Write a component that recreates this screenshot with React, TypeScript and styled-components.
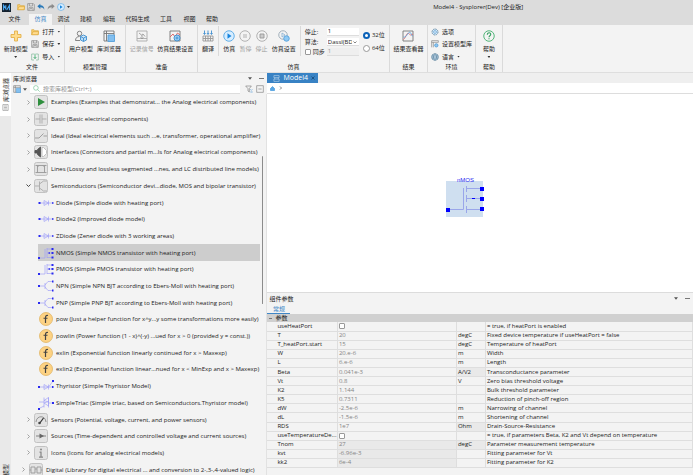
import React from "react";
import styled, { createGlobalStyle, css } from "styled-components";

const Global = createGlobalStyle`
  *, *::before, *::after { box-sizing: border-box; }
  html, body, #root { height: 100%; }
  body { margin: 0; overflow: hidden; background: #f3f3f3; color: #222;
    font: 6px/8px "Open Sans", "Noto Sans CJK SC", sans-serif; }
  button, input, select { font: inherit; color: inherit; margin: 0; padding: 0; border: 0; background: none; }
  button { white-space: nowrap; }
  svg { display: block; flex: none; }
`;

const Shell = styled.div`display: flex; flex-direction: column; height: 100vh;`;
const TitleBar = styled.header`
  display: grid; grid-template-columns: 38% 1fr; align-items: center;
  height: 14px; flex: none; background: #dcdcdc;
`;
const QuickBar = styled.div`display: flex; align-items: center; gap: 2px; padding-left: 2px;`;
const QuickButton = styled.button`display: flex;`;
const AppMark = styled.span`display: flex; margin-right: 4px;`;
const Title = styled.h1`margin: 0; font-size: 6px; font-weight: 400; line-height: 14px; text-align: center;`;
const MenuBar = styled.nav`display: flex; height: 11px; flex: none; background: #dcdcdc;`;
const MenuTab = styled.button<{ $on?: boolean; $w: number }>`
  width: ${p => p.$w}px; line-height: 11px; text-align: center;
  ${p => p.$on && css`background: #f3f3f3; color: #3f86c6;`}
`;

const Ribbon = styled.section`
  display: flex; height: 48px; flex: none; background: #f3f3f3; border-bottom: 1px solid #dedede;
`;
const Group = styled.div<{ $w: number }>`
  display: flex; flex-direction: column; width: ${p => p.$w}px; flex: none; padding-top: 1px;
  border-right: 1px solid #dadada;
`;
const GroupBody = styled.div`display: flex; flex: 1; justify-content: space-evenly;`;
const GroupName = styled.div`text-align: center; height: 9px; line-height: 8px;`;
const Divider = styled.div`width: 1px; height: 30px; background: #dadada;`;
const BigButton = styled.button<{ $dim?: boolean }>`
  display: flex; flex-direction: column; align-items: center; padding-top: 4px; gap: 3px;
  color: ${p => (p.$dim ? "#a0a0a0" : "#222")};
`;
const Stack = styled.div`display: flex; flex-direction: column; justify-content: space-between; padding: 1px 0 2px;`;
const SmallButton = styled.button`
  display: flex; align-items: center; gap: 3px; height: 9px; width: 100%;
`;
const Caret = styled.i`
  width: 3px; height: 2px; flex: none; background: #333; clip-path: polygon(0 0, 100% 0, 50% 100%);
`;
const SimForm = styled.div`
  display: grid; grid-template-columns: 20px 32px; column-gap: 2px; row-gap: 1px; align-content: start;
  align-items: center; grid-auto-rows: 9px; padding-top: 1px;
`;
const FieldLabel = styled.label`display: flex; align-items: center; gap: 2px; white-space: nowrap;`;
const Field = styled.input`width: 100%; height: 8px; background: #fff; padding: 0 1px; border-bottom: 1px solid #ddd;
  &:disabled { background: #efefef; color: #999; }
`;
const Select = styled.select`
  appearance: none; width: 100%; height: 8px; padding: 0 7px 0 1px; background: #fff; border-bottom: 1px solid #ddd;
`;
const SelectWrap = styled.span`position: relative; display: flex;
  svg { position: absolute; right: 2px; top: 3px; pointer-events: none; }
`;
const Check = styled.input`
  appearance: none; width: 6px; height: 6px; flex: none; border: 1px solid #999; border-radius: 1px; background: #fff;
`;
const Radios = styled.div`display: flex; flex-direction: column; gap: 5px; padding-top: 5px;`;
const Radio = styled.input`
  appearance: none; width: 7px; height: 7px; flex: none; border: 1px solid #999; border-radius: 50%; background: #fff;
  &:checked { border: 2px solid #0b62b8; }
`;

const Work = styled.main`display: flex; flex: 1; min-height: 0;`;
const SideStrip = styled.nav`
  display: flex; flex-direction: column; justify-content: space-between; width: 11px; flex: none; background: #e9e9e9;
`;
const SideTab = styled.button<{ $on?: boolean }>`
  display: flex; flex-direction: column; align-items: center; gap: 2px; padding: 5px 0 5px;
  ${p => p.$on && css`background: #fff;`}
  ${p => !p.$on && css`height: 12px; overflow: hidden; padding: 1px 0 0;`}
  span { writing-mode: vertical-rl; text-orientation: sideways; transform: rotate(180deg); }
`;
const Browser = styled.section`display: flex; flex-direction: column; flex: 0 0 37%; min-width: 0;`;
const PanelHead = styled.header`
  display: flex; align-items: center; gap: 7px; height: 11px; padding: 0 3px 0 2px; flex: none;
`;
const PanelTitle = styled.h2`margin: 0; flex: 1; font-size: 6px; font-weight: 400;`;
const HeadButton = styled.button`display: flex; align-items: center;`;
const SearchRow = styled.div`display: flex; align-items: center; gap: 2px; height: 10px; padding: 0 3px 0 2px; flex: none;`;
const SearchTools = styled.div`display: flex; gap: 3px; padding-left: 3px;`;
const SearchBox = styled.label`
  display: flex; align-items: center; gap: 3px; flex: 1; height: 9px; padding: 0 3px; margin-left: 1px; background: #fff;
  border-bottom: 1px solid #ddd;
`;
const SearchInput = styled.input`flex: 1; min-width: 0; height: 8px; outline: 0; &::placeholder { color: #909090; opacity: 1; }`;
const TreeWrap = styled.div`display: flex; flex: 1; min-height: 0; overflow: hidden;`;
const Tree = styled.ul`
  display: grid; grid-auto-rows: 1fr; flex: 1; min-width: 0; margin: 0 0 -3px; padding: 0; list-style: none;
`;
const TreeRow = styled.li<{ $kind: "pkg" | "leaf" | "root"; $on?: boolean }>`
  display: flex; align-items: center; gap: 3px; white-space: nowrap;
  margin-left: ${p => (p.$kind === "pkg" ? 15 : p.$kind === "root" ? 10 : 27)}px;
  ${p => p.$kind === "leaf" && css`gap: 2px;`}
  ${p => p.$on && css`background: #cdcdcd;`}
`;
const ScrollGutter = styled.div`width: 8px; flex: none; padding: 62px 3px 0; border-right: 1px solid #e2e2e2;`;
const ScrollThumb = styled.div`height: 148px; background: #8c8c8c; border-radius: 1px;`;

const Editor = styled.section`display: flex; flex-direction: column; flex: 1; min-width: 0;`;
const DocTabs = styled.div`display: flex; height: 10px; flex: none; background: #efefef;`;
const DocTab = styled.button`
  display: flex; align-items: center; gap: 3px; width: 51px; padding: 0 5px 0 6px; background: #3882c4; color: #fff; font-size: 7px;
`;
const Crumbs = styled.div`
  display: flex; align-items: center; gap: 4px; height: 11px; flex: none; padding-left: 3px; background: #fff;
  border-bottom: 1px solid #ddd;
`;
const Canvas = styled.div`position: relative; flex: 1; min-height: 0; background: #fff;`;
const Node = styled.figure`
  position: absolute; left: 179px; top: 82px; margin: 0; color: #2a2af0; text-align: center;
`;
const NodeName = styled.figcaption`font: 6px/6px "Liberation Sans", sans-serif; position: absolute; inset: 1px 0 auto;`;

const Params = styled.section`flex: none; background: #f3f3f3; border-top: 1px solid #dcdcdc; padding-bottom: 7px;`;
const ParamTabs = styled.div`display: flex; height: 10px;`;
const ParamTab = styled.button`width: 23px; color: #3f86c6; border-bottom: 1px solid #3f86c6; line-height: 8px;`;
const Section = styled.h3`
  display: flex; align-items: center; gap: 3px; height: 8px; margin: 0; padding-left: 2px; font-size: 6px; font-weight: 400;
  background: #d0d0d0;
`;
const Table = styled.table`
  width: 100%; height: 146px; table-layout: fixed; border-collapse: collapse; line-height: 7px;
`;
const Cell = styled.td<{ $shade?: boolean; $value?: boolean }>`
  height: 9px; padding: 0 1px; border: 0 solid #dedede; border-width: 0 1px 1px 0; white-space: nowrap; overflow: hidden;
  ${p => p.$value && css`color: #858585;`}
  ${p => p.$shade && css`background: #e9e9e9;`}
  ${Check} { display: block; }
`;
const NameCell = styled.th`
  padding: 0 1px 0 10px; border: 0 solid #dedede; border-width: 0 1px 1px 0; font-weight: 400; text-align: left;
  white-space: nowrap; overflow: hidden;
`;

const Svg = ({ w = 12, h = w, box = "0 0 24 24", children }: { w?: number; h?: number; box?: string; children: React.ReactNode }) => (
  <svg width={w} height={h} viewBox={box} fill="none" stroke="#777" strokeWidth="1.8" aria-hidden="true">{children}</svg>
);

const Folder = ({ w = 8 }) => <Svg w={w}><path d="M2 5h7l2 3h11v12H2z" fill="#f8cf70" stroke="#d9a233" /><path d="M2 20l4-9h17l-2 9z" fill="#ffdc90" stroke="#d9a233" /></Svg>;
const Save = ({ w = 8 }) => <Svg w={w}><path d="M2 2h17l3 3v17H2z" fill="#e6e6e6" /><path d="M7 2v7h10V2M6 22v-8h12v8M9 17h6" /></Svg>;
const Import = () => <Svg w={8}><path d="M9 3H2v18h7M15 3h7v18h-7" stroke="#6fae8b" /><path d="M12 2v14M8 12l4 5 4-5" stroke="#38a868" strokeWidth="2.4" /></Svg>;
const Plus = () => <Svg><path d="M9 2h6v7h7v6h-7v7H9v-7H2V9h7z" fill="#ffdc8c" stroke="#e3b04b" /></Svg>;
const User = () => <Svg><circle cx="9" cy="7" r="4.5" /><path d="M1 21c0-5 3-8 8-8M1 21h9" /><path d="M17 10l6 3v7l-6 3-6-3v-7zM11 13l6 3 6-3M17 16v7" fill="#b8dcf7" stroke="#3f8fd0" /></Svg>;
const Library = ({ w = 12 }) => <Svg w={w}><path d="M2 2h20v20H2z" fill="#f5f5f5" /><path d="M2 7h20M7 2v20" /><path d="M10 10h13v13H10z" fill="#83bfef" stroke="#58a3de" /></Svg>;
const Signal = () => <Svg><path d="M2 2h20v20H2zM2 17h20" stroke="#aaa" /><path d="M6 6l5 4 3-2 4 5M12 10v8M9 15l3 3 3-3" stroke="#999" /></Svg>;
const Results = () => <Svg><path d="M2 2h20v20H2z" /><path d="M2 14l6-6 4 6 5-8 5 4" stroke="#df5d5d" /><circle cx="16" cy="16" r="6" fill="#9ed0f5" stroke="#3c8dce" /><circle cx="16" cy="16" r="2" stroke="#3c8dce" /></Svg>;
const Translate = () => <Svg><path d="M2 12h20v10H2zM2 17h20M7 12v10M12 12v10M17 12v10" stroke="#999" /><path d="M5 1v7M12 1v7M19 1v7M3 6l2 3 2-3M10 6l2 3 2-3M17 6l2 3 2-3" stroke="#3f8fd0" /></Svg>;
const Play = ({ w = 12 }) => <Svg w={w}><circle cx="12" cy="12" r="10.5" fill="#d6edff" stroke="#57a8e4" /><path d="M9 6.5v11l8-5.5z" fill="#1785de" stroke="none" /></Svg>;
const Pause = () => <Svg><circle cx="12" cy="12" r="10.5" stroke="#aaa" /><path d="M10 8v8M14 8v8" stroke="#aaa" /></Svg>;
const Stop = () => <Svg><circle cx="12" cy="12" r="10.5" stroke="#aaa" /><path d="M8 8h8v8H8z" fill="#ccc" stroke="#999" /></Svg>;
const SimSet = () => <Svg><circle cx="10" cy="10" r="8.5" stroke="#9aa9b5" /><path d="M8 6v8l6-4z" stroke="#8fb6d6" /><circle cx="17" cy="17" r="5.5" fill="#8fcaf5" stroke="#55a0da" /></Svg>;
const Viewer = () => <Svg><path d="M2 2h20v20H2z" /><path d="M3 19C8 15 9 5 13 7s3 5 9 1" stroke="#e36464" /><path d="M3 14c5 2 7-6 11-9s5 8 8 7" stroke="#58a1dd" /></Svg>;
const Gear = () => <Svg w={8}><circle cx="12" cy="12" r="9" fill="#d5e8f6" stroke="#7294ad" strokeWidth="3" strokeDasharray="5 2" /><circle cx="12" cy="12" r="4" fill="#fff" stroke="#3f8fd0" strokeWidth="2" /></Svg>;
const LibSet = () => <Svg w={8}><path d="M2 22V2h20v5M2 7h20M7 7v15" /><circle cx="16" cy="16" r="5" fill="#8ec7f1" stroke="#3f8fd0" strokeWidth="2" /></Svg>;
const Globe = () => <Svg w={8}><circle cx="12" cy="12" r="10" fill="#d4eaf8" stroke="#47718f" /><path d="M2 9h20M2 15h20M12 2c-6 6-6 14 0 20M12 2c6 6 6 14 0 20" stroke="#47718f" /></Svg>;
const Help = () => <Svg><circle cx="12" cy="12" r="10.5" stroke="#43b06e" /><path d="M8.5 9.5c0-5 7-5 7-1 0 3-3.500 3-3.500 6M12 16.500v2" stroke="#2f9f5c" strokeWidth="2.2" /></Svg>;
const Down = () => <Svg w={4} h={3} box="0 0 5 3"><path d="M0 0h5L2.5 3z" fill="#555" stroke="none" /></Svg>;
const Minus = () => <Svg w={5} h={3} box="0 0 5 3"><path d="M0 1.5h5" strokeWidth="1" /></Svg>;
const Chevron = ({ open }: { open?: boolean }) => <Svg w={5} box="0 0 10 10">{open ? <path d="M1 3l4 4 4-4" stroke="#333" /> : <path d="M3 1l4 4-4 4" stroke="#999" />}</Svg>;

const glyphs: Record<string, React.ReactNode> = {
  play: <path d="M8 6v16l14-8z" fill="#2f8f3e" stroke="none" />,
  basic: <path d="M3 14h9M16 14h9M12 5v18M16 5v18" stroke="#aaa" />,
  ideal: <path d="M2 18h8l9-9M19 14h7" stroke="#999" />,
  iface: <g><path d="M13 4v20l-6-5v-3H2v-5h5V9z" fill="#555" stroke="#555" /><path d="M16 5v18h3l6-6v-6l-6-6z" fill="#fff" stroke="#bbb" /></g>,
  lines: <path d="M3 7h22M3 21h22M7 7v14M21 7v14M7 10l3-3M21 10l-3-3" stroke="#999" />,
  semi: <path d="M2 14h9M11 5v18M11 10l8-6h7M11 18l8 6h7" stroke="#aaa" />,
  sensor: <g><path d="M4 18C5 4 23 4 24 18" stroke="#888" /><path d="M11 21l8-11" stroke="#333" strokeWidth="2.5" /><circle cx="11" cy="20" r="2.5" fill="#444" stroke="none" /></g>,
  source: <g><path d="M4 14h20" /><path d="M11 9v10l9-5z" fill="#666" stroke="none" /></g>,
  info: <g><circle cx="14" cy="7" r="2" fill="#888" stroke="none" /><path d="M11 12h3v10M10 22h8" stroke="#888" strokeWidth="2.5" /></g>,
  digital: <path d="M4 8h8v12H4zM16 8h8v12h-8zM12 12h4M1 14h3M24 14h3" stroke="#999" />,
};
const Package = ({ name }: { name: string }) => (
  <Svg w={14} box="0 0 28 28"><rect x="1" y="1" width="26" height="26" rx="4" fill="#e3e3e3" stroke="#bdbdbd" />{glyphs[name]}</Svg>
);

const parts: Record<string, React.ReactNode> = {
  diode: <g><path d="M2 14h28M12 9v10l9-5zM21 9v10" /><path d="M1 12h4v4H1zM28 12.5h3v3h-3z" fill="#2a2af0" stroke="none" /></g>,
  mos: <g><path d="M2 24h12V6M18 4v20M18 6h11M18 14h11M18 23h11" /><path d="M0 22h4v4H0zM27 4h4v4h-4zM27 12h4v4h-4zM27 21h4v4h-4zM21 12.500h3v3h-3z" fill="#2a2af0" stroke="none" /></g>,
  bjt: <g><path d="M2 14h12M14 8v12M14 12l6-7h10M14 16l6 7h10" /><path d="M0 12h4v4H0zM28 3h3v4h-3zM28 21h3v4h-3z" fill="#2a2af0" stroke="none" /></g>,
  thyristor: <g><path d="M2 16h28M12 11v10l9-5zM21 11v10M22 15l8-11" /><path d="M0 14h4v4H0zM28 2h4v4h-4zM28 14h3v4h-3z" fill="#2a2af0" stroke="none" /></g>,
  triac: <g><path d="M2 12h10M12 3v20M12 9l9-6v9zM12 14l9 6v-9zM21 3v20M21 14h9M12 20l-8 4" /><path d="M28 12h4v4h-4zM0 24h4v4H0z" fill="#2a2af0" stroke="none" /></g>,
};
const Part = ({ name }: { name: string }) =>
  name === "fn" ? (
    <Svg w={16} h={14} box="0 0 32 28"><circle cx="16" cy="14" r="13" fill="#fdd283" stroke="#dfb25d" strokeWidth="1.5" /><path d="M20 7c-4-1-5 1-5 5v10M11 12.500h8" stroke="#444" strokeWidth="2.4" /></Svg>
  ) : (
    <svg width="16" height="14" viewBox="0 0 32 28" fill="none" stroke="#9c9cf8" strokeWidth="1.3" aria-hidden="true">{parts[name]}</svg>
  );

type Row = [kind: "pkg" | "leaf" | "root", icon: string, text: string];
const rows: Row[] = [
  ["pkg", "play", "Examples (Examples that demonstrat... the Analog electrical components)"],
  ["pkg", "basic", "Basic (Basic electrical components)"],
  ["pkg", "ideal", "Ideal (Ideal electrical elements such ...e, transformer, operational amplifier)"],
  ["pkg", "iface", "Interfaces (Connectors and partial m...ls for Analog electrical components)"],
  ["pkg", "lines", "Lines (Lossy and lossless segmented ...nes, and LC distributed line models)"],
  ["pkg", "semi", "Semiconductors (Semiconductor devi...diode, MOS and bipolar transistor)"],
  ["leaf", "diode", "Diode (Simple diode with heating port)"],
  ["leaf", "diode", "Diode2 (Improved diode model)"],
  ["leaf", "diode", "ZDiode (Zener diode with 3 working areas)"],
  ["leaf", "mos", "NMOS (Simple NMOS transistor with heating port)"],
  ["leaf", "mos", "PMOS (Simple PMOS transistor with heating port)"],
  ["leaf", "bjt", "NPN (Simple NPN BJT according to Ebers-Moll with heating port)"],
  ["leaf", "bjt", "PNP (Simple PNP BJT according to Ebers-Moll with heating port)"],
  ["leaf", "fn", "pow (Just a helper function for x^y...y some transformations more easily)"],
  ["leaf", "fn", "powlin (Power function (1 - x)^(-y) ...ued for x > 0 (provided y = const.))"],
  ["leaf", "fn", "exlin (Exponential function linearly continued for x > Maxexp)"],
  ["leaf", "fn", "exlin2 (Exponential function linear...nued for x < MinExp and x > Maxexp)"],
  ["leaf", "thyristor", "Thyristor (Simple Thyristor Model)"],
  ["leaf", "triac", "SimpleTriac (Simple triac, based on Semiconductors.Thyristor model)"],
  ["pkg", "sensor", "Sensors (Potential, voltage, current, and power sensors)"],
  ["pkg", "source", "Sources (Time-dependent and controlled voltage and current sources)"],
  ["pkg", "info", "Icons (Icons for analog electrical models)"],
  ["root", "digital", "Digital (Library for digital electrical ... and conversion to 2-,3-,4-valued logic)"],
];

type Param = [name: string, value: string | null, unit: string, text: string];
const params: Param[] = [
  ["useHeatPort", null, "", "= true, if heatPort is enabled"],
  ["T", "20", "degC", "Fixed device temperature if useHeatPort = false"],
  ["T_heatPort.start", "15", "degC", "Temperature of heatPort"],
  ["W", "20.e-6", "m", "Width"],
  ["L", "6.e-6", "m", "Length"],
  ["Beta", "0.041e-3", "A/V2", "Transconductance parameter"],
  ["Vt", "0.8", "V", "Zero bias threshold voltage"],
  ["K2", "1.144", "", "Bulk threshold parameter"],
  ["K5", "0.7311", "", "Reduction of pinch-off region"],
  ["dW", "-2.5e-6", "m", "Narrowing of channel"],
  ["dL", "-1.5e-6", "m", "Shortening of channel"],
  ["RDS", "1e7", "Ohm", "Drain-Source-Resistance"],
  ["useTemperatureDe...", null, "", "= true, if parameters Beta, K2 and Vt depend on temperature"],
  ["Tnom", "27", "degC", "Parameter measurement temperature"],
  ["kvt", "-6.96e-3", "", "Fitting parameter for Vt"],
  ["kk2", "6e-4", "", "Fitting parameter for K2"],
];
const shadedValues = ["Tnom", "kvt", "kk2"];
const shadedUnits = ["Beta", "RDS", "Tnom"];

const menus: [string, number][] = [["文件", 29], ["仿真", 23], ["调试", 23], ["建模", 22], ["编辑", 24], ["代码生成", 33], ["工具", 24], ["视图", 23], ["帮助", 22]];

export default function App() {
  return (
    <Shell>
      <Global />
      <TitleBar>
        <QuickBar>
          <AppMark><Svg w={9}><rect width="24" height="24" fill="#14202e" stroke="none" /><path d="M4 19V6l6 9V6M13 18l7-12v13" stroke="#4aa6ef" strokeWidth="3" /></Svg></AppMark>
          <QuickButton aria-label="打开文件"><Folder /></QuickButton>
          <QuickButton aria-label="保存文件"><Save /></QuickButton>
          <QuickButton aria-label="撤销"><Svg w={8}><path d="M1 10l9-8v5c8 0 12 5 12 13-3-5-6-7-12-7v5z" fill="#2878b8" stroke="none" /></Svg></QuickButton>
          <QuickButton aria-label="重做"><Svg w={8}><path d="M23 10l-9-8v5C6 7 2 12 2 20c3-5 6-7 12-7v5z" fill="#8b8b8b" stroke="none" /></Svg></QuickButton>
          <QuickButton aria-label="运行"><Play w={8} /></QuickButton>
          <Caret />
        </QuickBar>
        <Title>Model4 - Sysplorer(Dev) [企业版]</Title>
      </TitleBar>
      <MenuBar>{menus.map(([m, w]) => <MenuTab key={m} $w={w} $on={m === "仿真"}>{m}</MenuTab>)}</MenuBar>
      <Ribbon>
        <Group $w={65}>
          <GroupBody>
            <BigButton><Plus />新建模型<Caret /></BigButton>
            <Stack>
              <SmallButton><Folder />打开<Caret /></SmallButton>
              <SmallButton><Save />保存<Caret /></SmallButton>
              <SmallButton><Import />导入<Caret /></SmallButton>
            </Stack>
          </GroupBody>
          <GroupName>文件</GroupName>
        </Group>
        <Group $w={61}>
          <GroupBody><BigButton><User />用户模型</BigButton><BigButton><Library />库浏览器</BigButton></GroupBody>
          <GroupName>模型管理</GroupName>
        </Group>
        <Group $w={72}>
          <GroupBody><BigButton $dim disabled><Signal />记录信号</BigButton><BigButton><Results />仿真结果设置</BigButton></GroupBody>
          <GroupName>准备</GroupName>
        </Group>
        <Group $w={192}>
          <GroupBody>
            <BigButton><Translate />翻译</BigButton>
            <Divider />
            <BigButton><Play />仿真</BigButton>
            <BigButton $dim disabled><Pause />暂停</BigButton>
            <BigButton $dim disabled><Stop />停止</BigButton>
            <BigButton><SimSet />仿真设置</BigButton>
            <Divider />
            <SimForm>
              <FieldLabel htmlFor="stop">停止:</FieldLabel><Field id="stop" defaultValue="1" />
              <FieldLabel htmlFor="algo">算法:</FieldLabel>
              <SelectWrap><Select id="algo"><option>Dassl(BDF)</option></Select><Svg w={4} h={3} box="0 0 8 6"><path d="M1 1l3 3 3-3" /></Svg></SelectWrap>
              <FieldLabel><Check type="checkbox" />同步</FieldLabel><Field aria-label="同步值" defaultValue="1" disabled />
            </SimForm>
            <Radios>
              <FieldLabel><Radio type="radio" name="bits" defaultChecked />32位</FieldLabel>
              <FieldLabel><Radio type="radio" name="bits" />64位</FieldLabel>
            </Radios>
          </GroupBody>
          <GroupName>仿真</GroupName>
        </Group>
        <Group $w={38}><GroupBody><BigButton><Viewer />结果查看器</BigButton></GroupBody><GroupName>结果</GroupName></Group>
        <Group $w={48}>
          <GroupBody>
            <Stack>
              <SmallButton><Gear />选项</SmallButton>
              <SmallButton><LibSet />设置模型库</SmallButton>
              <SmallButton><Globe />语言<Caret /></SmallButton>
            </Stack>
          </GroupBody>
          <GroupName>环境</GroupName>
        </Group>
        <Group $w={27}><GroupBody><BigButton><Help />帮助<Caret /></BigButton></GroupBody><GroupName>帮助</GroupName></Group>
      </Ribbon>
      <Work>
        <SideStrip>
          <SideTab $on><span>库浏览器</span><Svg w={7}><path d="M3 2h18v20H3zM7 7h10M7 12h10M7 17h10" /></Svg></SideTab>
          <SideTab><span>模型</span></SideTab>
        </SideStrip>
        <Browser>
          <PanelHead><PanelTitle>库浏览器</PanelTitle><HeadButton aria-label="菜单"><Down /></HeadButton><HeadButton aria-label="收起"><Minus /></HeadButton></PanelHead>
          <SearchRow>
            <HeadButton aria-label="视图模式"><Library w={8} /></HeadButton><Down />
            <SearchBox><Svg w={7}><circle cx="10" cy="10" r="8" stroke="#54b47c" /><path d="M16 16l7 7" stroke="#54b47c" /></Svg><SearchInput aria-label="搜索库模型" placeholder="搜索库模型(Ctrl+;)" /></SearchBox>
            <SearchTools>
              <HeadButton aria-label="筛选"><Svg w={8}><path d="M2 3h17l-6 8v10l-4-3v-7z" /><path d="M16 13l3 3 3-3M16 21h7" stroke="#3f8fd0" /></Svg></HeadButton>
              <HeadButton aria-label="全部折叠"><Svg w={8}><path d="M2 2h20v20H2zM7 12h10" /></Svg></HeadButton>
            </SearchTools>
          </SearchRow>
          <TreeWrap>
            <Tree>
              {rows.map(([kind, icon, text]) => (
                <TreeRow key={text} $kind={kind} $on={text.startsWith("NMOS")}>
                  {kind === "leaf" ? <Part name={icon} /> : <><Chevron open={icon === "semi"} /><Package name={icon} /></>}
                  <span>{text}</span>
                </TreeRow>
              ))}
            </Tree>
            <ScrollGutter><ScrollThumb /></ScrollGutter>
          </TreeWrap>
        </Browser>
        <Editor>
          <DocTabs><DocTab><Svg w={7}><path d="M3 2h18v7H3zM3 14h18v8H3zM6 9v5M18 9v5" stroke="#cfe2f2" /></Svg>Model4 <Svg w={4} box="0 0 8 8"><path d="M1 1l6 6M7 1L1 7" stroke="#174f80" /></Svg></DocTab></DocTabs>
          <Crumbs><Svg w={5} box="0 0 10 10"><path d="M1 5l4-4 4 4v4H1z" fill="#5aa6e2" stroke="#5aa6e2" /></Svg><Svg w={4} box="0 0 8 8"><path d="M2 1l3 3-3 3" /></Svg></Crumbs>
          <Canvas>
            <Node>
              <svg width="38" height="44" viewBox="0 0 38 44" fill="none" stroke="#9aa6ea" aria-label="nMOS">
                <rect y="5" width="37" height="36" fill="#cfdff0" stroke="none" />
                <path d="M2 33.500h15.500V12M20.500 10v6M20.500 19v7M20.500 30v7M20.500 12.500h14M20.500 22.500h14M20.500 33.500h14" />
                <path d="M0 32h4v4H0zM34 11h4v4h-4zM34 21h4v4h-4zM34 31h4v4h-4zM26 22h3v1h-3z" fill="#0000ff" stroke="none" />
              </svg>
              <NodeName>nMOS</NodeName>
            </Node>
          </Canvas>
          <Params>
            <PanelHead><PanelTitle>组件参数</PanelTitle><HeadButton aria-label="菜单"><Down /></HeadButton><HeadButton aria-label="收起"><Minus /></HeadButton></PanelHead>
            <ParamTabs><ParamTab>常规</ParamTab></ParamTabs>
            <Section><Svg w={3} h={3} box="0 0 3 3"><path d="M0 1.500h3" strokeWidth="1" /></Svg>参数</Section>
            <Table>
              <colgroup><col width="70" /><col width="119" /><col width="29" /><col /></colgroup>
              <tbody>
                {params.map(([name, value, unit, text]) => (
                  <tr key={name}>
                    <NameCell scope="row">{name}</NameCell>
                    <Cell $value $shade={shadedValues.includes(name)}>{value === null ? <Check type="checkbox" aria-label={name} /> : value}</Cell>
                    <Cell $shade={shadedUnits.includes(name)}>{unit}</Cell>
                    <Cell>{text}</Cell>
                  </tr>
                ))}
              </tbody>
            </Table>
          </Params>
        </Editor>
      </Work>
    </Shell>
  );
}
